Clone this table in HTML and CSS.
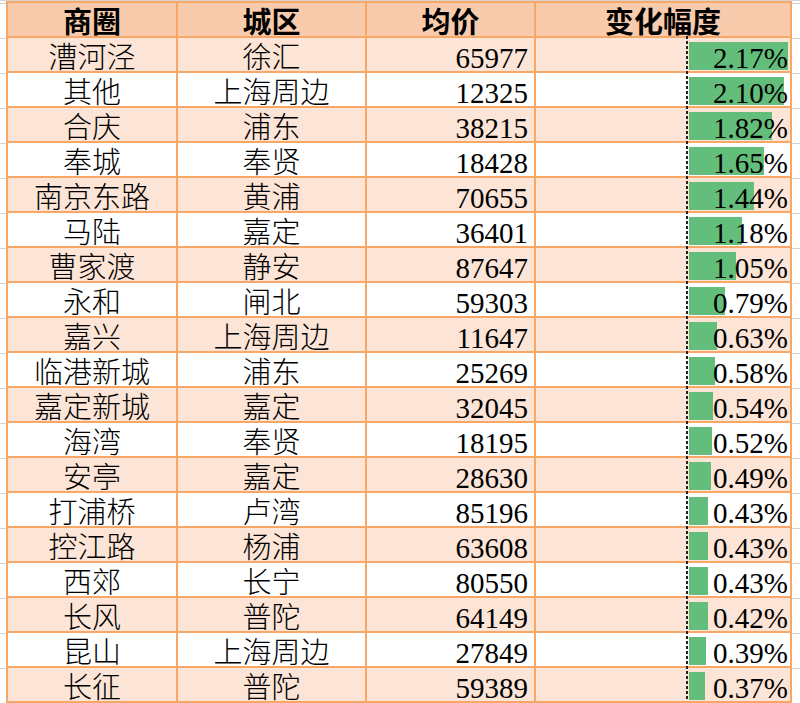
FILE: index.html
```html
<!DOCTYPE html>
<html lang="zh-CN">
<head>
<meta charset="utf-8">
<title>商圈涨幅</title>
<link rel="stylesheet" href="styles.css">
</head>
<body>
<div class="sheet">
  <div class="grid">
    <div class="row head">
      <div class="cell">商圈</div><div class="cell">城区</div><div class="cell">均价</div><div class="cell">变化幅度</div>
    </div>
    <div class="row alt"><div class="cell c">漕河泾</div><div class="cell c">徐汇</div><div class="cell r">65977</div><div class="cell pct"><span class="axis"></span><span class="bar" style="width:98.5px"></span><span class="val">2.17%</span></div></div>
    <div class="row"><div class="cell c">其他</div><div class="cell c">上海周边</div><div class="cell r">12325</div><div class="cell pct"><span class="axis"></span><span class="bar" style="width:95.3px"></span><span class="val">2.10%</span></div></div>
    <div class="row alt"><div class="cell c">合庆</div><div class="cell c">浦东</div><div class="cell r">38215</div><div class="cell pct"><span class="axis"></span><span class="bar" style="width:82.5px"></span><span class="val">1.82%</span></div></div>
    <div class="row"><div class="cell c">奉城</div><div class="cell c">奉贤</div><div class="cell r">18428</div><div class="cell pct"><span class="axis"></span><span class="bar" style="width:74.7px"></span><span class="val">1.65%</span></div></div>
    <div class="row alt"><div class="cell c">南京东路</div><div class="cell c">黄浦</div><div class="cell r">70655</div><div class="cell pct"><span class="axis"></span><span class="bar" style="width:65.2px"></span><span class="val">1.44%</span></div></div>
    <div class="row"><div class="cell c">马陆</div><div class="cell c">嘉定</div><div class="cell r">36401</div><div class="cell pct"><span class="axis"></span><span class="bar" style="width:53.3px"></span><span class="val">1.18%</span></div></div>
    <div class="row alt"><div class="cell c">曹家渡</div><div class="cell c">静安</div><div class="cell r">87647</div><div class="cell pct"><span class="axis"></span><span class="bar" style="width:47.4px"></span><span class="val">1.05%</span></div></div>
    <div class="row"><div class="cell c">永和</div><div class="cell c">闸北</div><div class="cell r">59303</div><div class="cell pct"><span class="axis"></span><span class="bar" style="width:35.5px"></span><span class="val">0.79%</span></div></div>
    <div class="row alt"><div class="cell c">嘉兴</div><div class="cell c">上海周边</div><div class="cell r">11647</div><div class="cell pct"><span class="axis"></span><span class="bar" style="width:28.2px"></span><span class="val">0.63%</span></div></div>
    <div class="row"><div class="cell c">临港新城</div><div class="cell c">浦东</div><div class="cell r">25269</div><div class="cell pct"><span class="axis"></span><span class="bar" style="width:26px"></span><span class="val">0.58%</span></div></div>
    <div class="row alt"><div class="cell c">嘉定新城</div><div class="cell c">嘉定</div><div class="cell r">32045</div><div class="cell pct"><span class="axis"></span><span class="bar" style="width:24.1px"></span><span class="val">0.54%</span></div></div>
    <div class="row"><div class="cell c">海湾</div><div class="cell c">奉贤</div><div class="cell r">18195</div><div class="cell pct"><span class="axis"></span><span class="bar" style="width:23.2px"></span><span class="val">0.52%</span></div></div>
    <div class="row alt"><div class="cell c">安亭</div><div class="cell c">嘉定</div><div class="cell r">28630</div><div class="cell pct"><span class="axis"></span><span class="bar" style="width:21.8px"></span><span class="val">0.49%</span></div></div>
    <div class="row"><div class="cell c">打浦桥</div><div class="cell c">卢湾</div><div class="cell r">85196</div><div class="cell pct"><span class="axis"></span><span class="bar" style="width:19.1px"></span><span class="val">0.43%</span></div></div>
    <div class="row alt"><div class="cell c">控江路</div><div class="cell c">杨浦</div><div class="cell r">63608</div><div class="cell pct"><span class="axis"></span><span class="bar" style="width:19.1px"></span><span class="val">0.43%</span></div></div>
    <div class="row"><div class="cell c">西郊</div><div class="cell c">长宁</div><div class="cell r">80550</div><div class="cell pct"><span class="axis"></span><span class="bar" style="width:19.1px"></span><span class="val">0.43%</span></div></div>
    <div class="row alt"><div class="cell c">长风</div><div class="cell c">普陀</div><div class="cell r">64149</div><div class="cell pct"><span class="axis"></span><span class="bar" style="width:18.7px"></span><span class="val">0.42%</span></div></div>
    <div class="row"><div class="cell c">昆山</div><div class="cell c">上海周边</div><div class="cell r">27849</div><div class="cell pct"><span class="axis"></span><span class="bar" style="width:17.3px"></span><span class="val">0.39%</span></div></div>
    <div class="row alt"><div class="cell c">长征</div><div class="cell c">普陀</div><div class="cell r">59389</div><div class="cell pct"><span class="axis"></span><span class="bar" style="width:16.4px"></span><span class="val">0.37%</span></div></div>
  </div>
</div>
</body>
</html>
```

FILE: styles.css
```css
html, body {
  margin: 0;
  padding: 0;
  background: #fff;
}

body {
  height: 703px;
  overflow: hidden;
  background-image:
    linear-gradient(to bottom, #d4d4d4 0 1px, transparent 1px),
    linear-gradient(to bottom, #d4d4d4 0 1px, transparent 1px);
  background-size: 100% 703px, 100% 35px;
  background-position: 0 0, 0 3px;
  background-repeat: no-repeat, repeat-y;
}

.sheet {
  padding: 1px 0 0 6px;
}

.grid {
  display: grid;
  grid-template-columns: 168px 187px 167px 254px;
  grid-auto-rows: 33px;
  gap: 2px;
  padding: 2px;
  width: max-content;
  background: #f8a766;
  font-family: "Noto Sans CJK SC", sans-serif;
  font-size: 29px;
  font-weight: 300;
  color: #000;
}

.row {
  display: contents;
}

.cell {
  background: #fff;
  line-height: 41px;
  white-space: nowrap;
  position: relative;
}

.head .cell {
  background: #f8cbad;
  font-weight: bold;
  text-align: center;
  line-height: 33px;
  padding-top: 1px;
}

.alt .cell {
  background: #fce4d6;
}

.c {
  text-align: center;
  line-height: 33px;
  padding-top: 1px;
}

.r {
  text-align: right;
  padding-right: 6px;
  font-family: "Liberation Serif", "DejaVu Serif", serif;
  font-weight: 400;
}

.pct {
  text-align: right;
  padding-right: 2px;
  font-family: "Liberation Serif", "DejaVu Serif", serif;
  font-weight: 400;
}

.axis {
  position: absolute;
  left: 150px;
  top: -2px;
  width: 2px;
  height: 35px;
  background: repeating-linear-gradient(to bottom, #222 0 3px, transparent 3px 5px);
}

.bar {
  position: absolute;
  left: 153px;
  top: 4px;
  height: 28px;
  background: #63be7b;
}

.val {
  position: relative;
}
```
